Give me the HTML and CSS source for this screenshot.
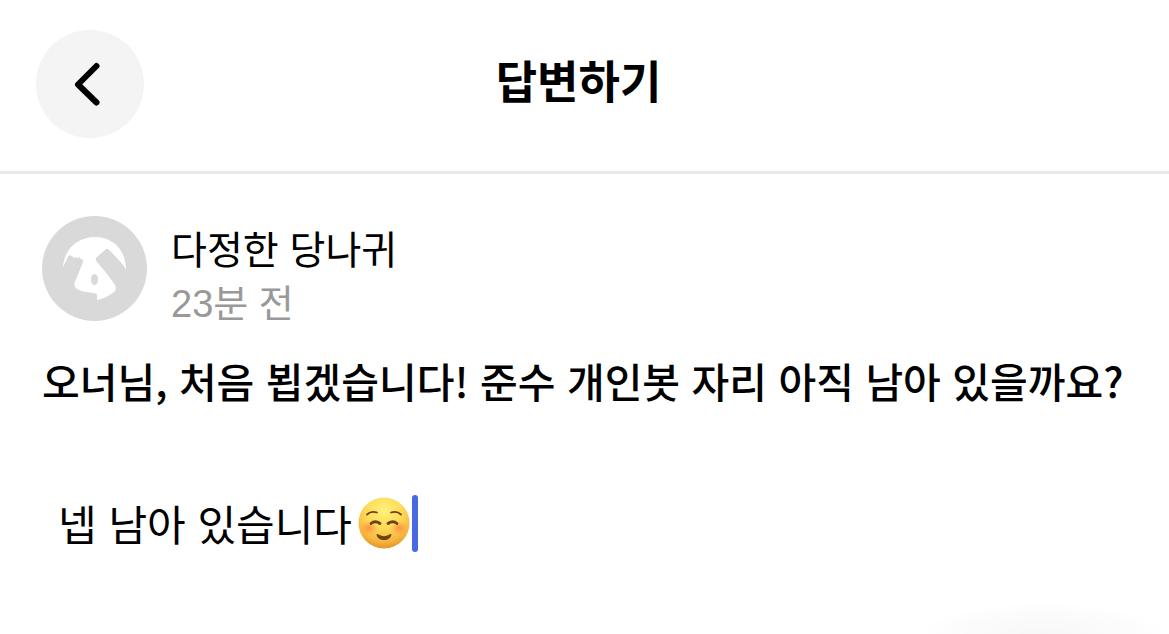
FILE: index.html
```html
<!DOCTYPE html>
<html lang="ko">
<head>
<meta charset="utf-8">
<meta name="viewport" content="width=device-width, initial-scale=1">
<title>답변하기</title>
<link rel="stylesheet" href="styles.css">
</head>
<body>
<header class="topbar">
  <button class="back" type="button" aria-label="뒤로">
    <svg class="back-icon" viewBox="0 0 108 108" aria-hidden="true"><path d="M60.500 36 42 54.500 60.500 72.500"/></svg>
  </button>
  <h1 class="title">답변하기</h1>
</header>
<main class="content">
  <section class="author">
    <svg class="avatar" viewBox="0 0 105 105" aria-hidden="true">
      <circle cx="52.500" cy="52.500" r="52.500" fill="#d9d9d9"/>
      <path fill="#fff" d="M21 51C22 34 35 21 53 21C70 21 84 33 84 54C82 49 76 43 71 38C69 36 66 32 64 33L54 42Q53 44 55 46C60 52 68 61 73 69Q76 75 69 78C65 81 61 82 56 84L55 83V78C50 76 42 77 35 73Q31 70 33 66L41 46Q42 43 39 43L37 41Q35 43 34 41Q32 43 30 40Q27 38 26 41Z"/>
      <ellipse cx="52.500" cy="63.500" rx="3.500" ry="5.500" fill="#d9d9d9"/>
    </svg>
    <div class="meta">
      <p class="name">다정한 당나귀</p>
      <p class="time">23분 전</p>
    </div>
  </section>
  <p class="question">오너님, 처음 뵙겠습니다! 준수 개인봇 자리 아직 남아 있을까요?</p>
  <div class="reply">
    <input class="reply-input" type="text" aria-label="답변" value="넵 남아 있습니다">
    <svg class="emoji" viewBox="0 0 52 52" role="img" aria-label="미소 짓는 얼굴">
      <defs>
        <radialGradient id="face" cx="50%" cy="25%" r="76%">
          <stop offset="0" stop-color="#fff07a"/>
          <stop offset=".45" stop-color="#ffdb58"/>
          <stop offset=".8" stop-color="#f6b63f"/>
          <stop offset="1" stop-color="#e3922b"/>
        </radialGradient>
        <radialGradient id="blush">
          <stop offset="0" stop-color="#ff713d" stop-opacity=".65"/>
          <stop offset="1" stop-color="#ff8a3d" stop-opacity="0"/>
        </radialGradient>
      </defs>
      <circle cx="26" cy="26" r="25.500" fill="url(#face)"/>
      <ellipse cx="11" cy="31" rx="9" ry="7" fill="url(#blush)"/>
      <ellipse cx="41" cy="31" rx="9" ry="7" fill="url(#blush)"/>
      <g fill="none" stroke="#6d4317" stroke-linecap="round">
        <path stroke-width="1.800" d="M9 17.500Q13 13.500 19 15.500M33 15.500Q39 13.500 43 17.500"/>
        <path stroke-width="2.800" d="M13 26.500Q17 23 22 26.500M30 26.500Q35 23 39 26.500"/>
      </g>
      <path fill="#6d4317" d="M18.500 37.500Q19 36.500 20.500 37.500Q26 41 31.500 37.500Q33 36.500 33.500 37.500C33 41 30 43 26 43S19 41 18.500 37.500Z"/>
    </svg>
    <span class="caret"></span>
  </div>
</main>
<div class="shade"></div>
</body>
</html>
```
FILE: styles.css
```css
* {
  box-sizing: border-box;
}

body {
  margin: 0;
  min-height: 100vh;
  position: relative;
  background: #fff;
  color: #000;
  font-family: "Noto Sans CJK KR", sans-serif;
}

h1,
p {
  margin: 0;
}

.topbar {
  display: grid;
  grid-template-columns: 108px 1fr 108px;
  align-items: center;
  padding: 30px 36px 33px;
  border-bottom: 3px solid #e9e9e9;
}

.back {
  width: 108px;
  height: 108px;
  padding: 0;
  border: 0;
  border-radius: 50%;
  background: #f4f4f4;
}

.back-icon {
  display: block;
  width: 108px;
  height: 108px;
  fill: none;
  stroke: #000;
  stroke-width: 6;
  stroke-linecap: round;
  stroke-linejoin: round;
}

.title {
  padding: 0 12px 8px 0;
  font-size: 45px;
  line-height: 60px;
  font-weight: 700;
  text-align: center;
}

.content {
  padding: 42px 42px 24px;
}

.author {
  display: flex;
  align-items: flex-start;
  gap: 24px;
}

.avatar {
  flex: none;
  width: 105px;
  height: 105px;
}

.meta {
  padding-top: 4px;
}

.name {
  font-size: 39px;
  line-height: 54px;
}

.time {
  color: #999;
  font-family: "Liberation Sans", "Noto Sans CJK KR", sans-serif;
  font-size: 38px;
  line-height: 60px;
}

.question {
  margin-top: 16px;
  font-size: 41px;
  line-height: 60px;
  font-weight: 500;
}

.reply {
  display: flex;
  align-items: center;
  margin-top: 83px;
  padding-left: 16px;
}

.reply-input {
  field-sizing: content;
  height: 60px;
  padding: 0 0 2px;
  border: 0;
  outline: 0;
  background: none;
  color: inherit;
  font-family: inherit;
  font-size: 42px;
}

.emoji {
  flex: none;
  width: 52px;
  height: 52px;
  margin-left: 6px;
}

.caret {
  width: 6px;
  height: 57px;
  margin-left: 2px;
  border-radius: 3px;
  background: #4868e4;
}

.shade {
  position: absolute;
  right: 0;
  bottom: 0;
  width: 250px;
  height: 32px;
  background: radial-gradient(ellipse at bottom, rgba(0, 0, 0, 0.03), rgba(0, 0, 0, 0.012) 50%, transparent 70%);
}
```
